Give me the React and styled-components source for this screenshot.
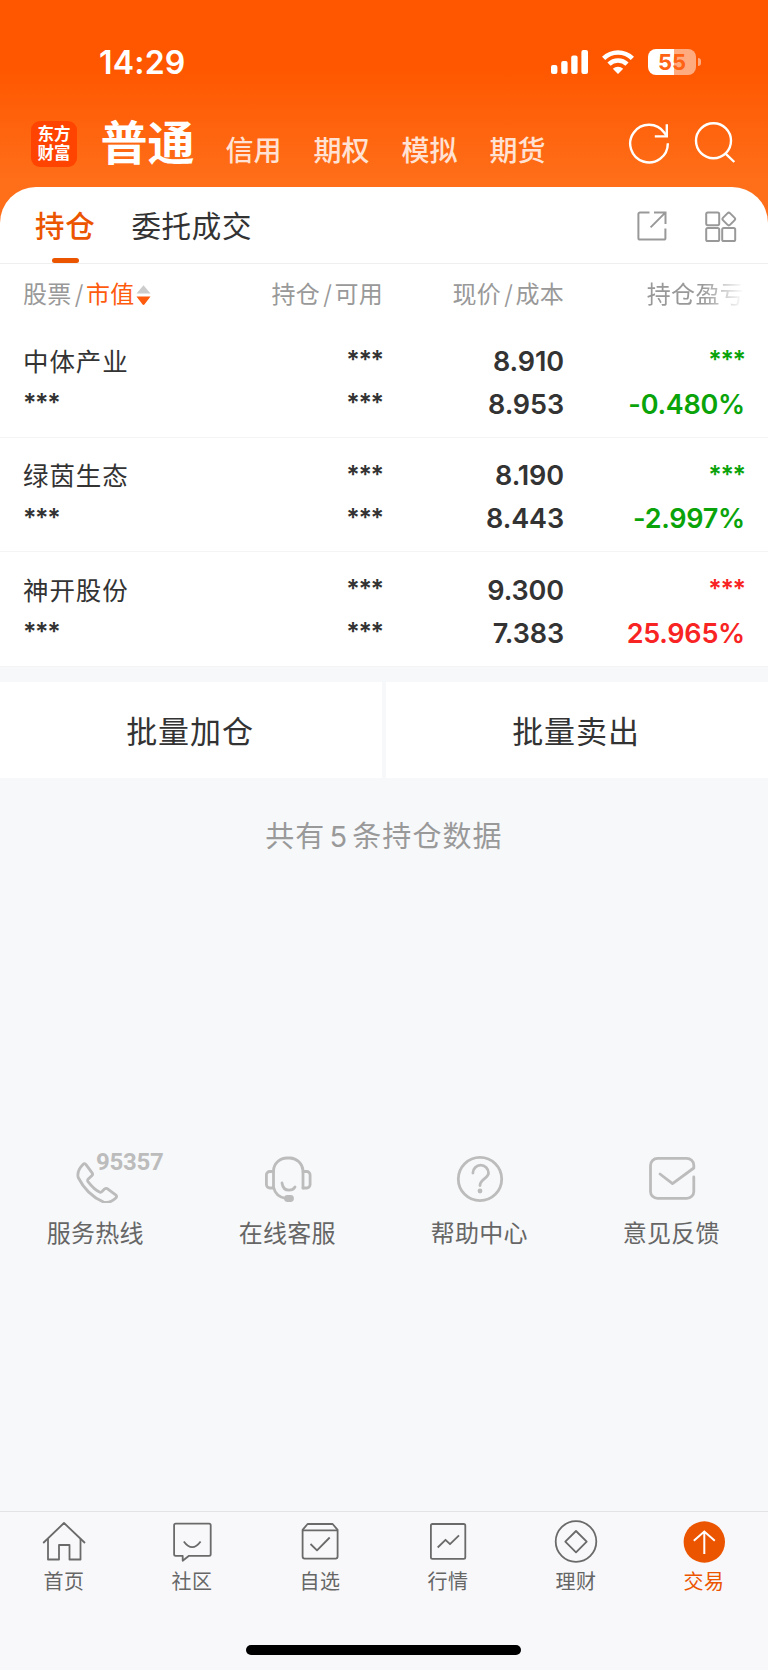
import React, { useState } from "react";
import styled, { createGlobalStyle } from "styled-components";

const holdings = [
  { name: "中体产业", price: "8.910", cost: "8.953", rate: "-0.480%" },
  { name: "绿茵生态", price: "8.190", cost: "8.443", rate: "-2.997%" },
  { name: "神开股份", price: "9.300", cost: "7.383", rate: "25.965%" },
];

const accounts = ["信用", "期权", "模拟", "期货"];

const services = [
  { label: "服务热线", icon: <PhoneIcon />, badge: "95357" },
  { label: "在线客服", icon: <HeadsetIcon /> },
  { label: "帮助中心", icon: <HelpIcon /> },
  { label: "意见反馈", icon: <FeedbackIcon /> },
];

const navItems = [
  { label: "首页", icon: <HomeIcon /> },
  { label: "社区", icon: <CommunityIcon /> },
  { label: "自选", icon: <WatchlistIcon /> },
  { label: "行情", icon: <MarketIcon /> },
  { label: "理财", icon: <WealthIcon /> },
  { label: "交易", icon: <TradeIcon /> },
];

function App() {
  const [tab, setTab] = useState("持仓");
  const [activeNav, setActiveNav] = useState("交易");

  return (
    <Screen>
      <GlobalStyle />
      <Header>
        <StatusBar>
          <Time>14:29</Time>
          <SignalIcon />
          <WifiIcon />
          <Battery>
            <BatteryBody>55</BatteryBody>
            <BatteryTip />
          </Battery>
        </StatusBar>
        <AccountBar>
          <Logo>
            <span>东方</span>
            <span>财富</span>
          </Logo>
          <CurrentAccount>普通</CurrentAccount>
          <Accounts>
            {accounts.map((item) => (
              <Account key={item}>{item}</Account>
            ))}
          </Accounts>
          <RefreshIcon />
          <SearchIcon />
        </AccountBar>
      </Header>
      <Card>
        <Tabs>
          {["持仓", "委托成交"].map((item) => (
            <Tab key={item} $active={item === tab} onClick={() => setTab(item)}>
              {item}
            </Tab>
          ))}
          <TabTools>
            <ExportIcon />
            <GridIcon />
          </TabTools>
        </Tabs>
        <TableHead>
          <HeadCell $left>
            股票<Slash>/</Slash>
            <Sorted>市值</Sorted>
            <SortIcon />
          </HeadCell>
          <HeadCell>
            持仓<Slash>/</Slash>可用
          </HeadCell>
          <HeadCell>
            现价<Slash>/</Slash>成本
          </HeadCell>
          <HeadCell $fade>持仓盈亏</HeadCell>
        </TableHead>
        {holdings.map((item) => (
          <Row key={item.name}>
            <Name>{item.name}</Name>
            <Masked>***</Masked>
            <Figure>{item.price}</Figure>
            <Masked $trend={item.rate[0] === "-" ? "down" : "up"}>***</Masked>
            <Masked $left>***</Masked>
            <Masked>***</Masked>
            <Figure>{item.cost}</Figure>
            <Rate $trend={item.rate[0] === "-" ? "down" : "up"}>
              {item.rate}
            </Rate>
          </Row>
        ))}
      </Card>
      <BatchActions>
        <BatchButton>批量加仓</BatchButton>
        <BatchButton>批量卖出</BatchButton>
      </BatchActions>
      <Summary>
        共有<Count>5</Count>条持仓数据
      </Summary>
      <Services>
        {services.map((item) => (
          <Service key={item.label}>
            <ServiceIcon>
              {item.icon}
              {item.badge && <Hotline>{item.badge}</Hotline>}
            </ServiceIcon>
            <ServiceLabel>{item.label}</ServiceLabel>
          </Service>
        ))}
      </Services>
      <BottomNav>
        <NavList>
          {navItems.map((item) => (
            <NavItem
              key={item.label}
              $active={item.label === activeNav}
              onClick={() => setActiveNav(item.label)}
            >
              {item.icon}
              {item.label}
            </NavItem>
          ))}
        </NavList>
        <HomeIndicator />
      </BottomNav>
    </Screen>
  );
}

export default App;

function SignalIcon() {
  return (
    <svg width="38" height="24" viewBox="0 0 38 24" fill="#fff">
      <rect x="0" y="15" width="6.4" height="9" rx="2" />
      <rect x="10.2" y="11" width="6.4" height="13" rx="2" />
      <rect x="20.2" y="5.5" width="6.4" height="18.5" rx="2" />
      <rect x="30.4" y="0" width="6.6" height="24" rx="2" />
    </svg>
  );
}

function WifiIcon() {
  return (
    <svg width="32" height="24" viewBox="0 0 32 24">
      <g fill="none" stroke="#fff" strokeWidth="4.6">
        <path d="M1.6 8.4a20.6 20.6 0 0 1 28.8 0" />
        <path d="M7 14.1a12.9 12.9 0 0 1 18 0" />
      </g>
      <path d="M16 24l-5.2-5.2a7.5 7.5 0 0 1 10.4 0z" fill="#fff" />
    </svg>
  );
}

function RefreshIcon() {
  return (
    <svg width="42" height="42" viewBox="0 0 42 42" fill="none" stroke="#fff" strokeWidth="2.4">
      <path d="M39.8 21.3A18.8 18.8 0 1 1 36.4 10.8L38.3 13.6" />
      <path d="M38.8 2.2v12.2H26.8" />
    </svg>
  );
}

function SearchIcon() {
  return (
    <svg width="42" height="42" viewBox="0 0 42 42" fill="none" stroke="#fff" strokeWidth="2.4">
      <circle cx="19.5" cy="18.8" r="17.5" />
      <path d="M31 31.2L40.3 40" />
    </svg>
  );
}

function ExportIcon() {
  return (
    <svg width="30" height="30" viewBox="0 0 30 30" fill="none" stroke="#999" strokeWidth="2">
      <path d="M12.5 1.4H3a1.6 1.6 0 0 0-1.6 1.6v24a1.6 1.6 0 0 0 1.6 1.6h24.2a1.2 1.2 0 0 0 1.2-1.2V17.5" />
      <path d="M17 1.4h11.5V13M28.3 1.6L13.6 16.4" />
    </svg>
  );
}

function GridIcon() {
  return (
    <svg width="32" height="32" viewBox="0 0 32 32" fill="none" stroke="#999" strokeWidth="2">
      <rect x="1.2" y="1.6" width="13" height="12.6" rx="1.6" />
      <rect x="1.2" y="17" width="13" height="13" rx="1.6" />
      <rect x="17.2" y="17" width="13" height="13" rx="1.6" />
      <rect x="18.8" y="3" width="10" height="10" rx="2" transform="rotate(45 23.8 8)" />
    </svg>
  );
}

function SortIcon() {
  return (
    <svg width="15" height="21" viewBox="0 0 15 21">
      <path d="M7.5 0.3L14.5 8.5H0.5z" fill="#ccc" />
      <path d="M0.5 11.5h14L8.6 19.3a1.5 1.5 0 0 1-2.2 0z" fill="#fe5b0d" />
    </svg>
  );
}

function PhoneIcon() {
  return (
    <svg width="48" height="48" viewBox="0 0 48 48" {...serviceStroke}>
      <path d="M11.2 9.3Q12.6 8 14 9.6L20.3 18.2Q21 19.4 20 20.4L16 24.3Q15.2 25.4 16 26.6Q22.4 35 28 37.2Q29 37.6 30 36.6L32.5 34Q33.8 33 35.2 33.6L44 40.2Q45.2 41.5 43.8 43Q37.5 49 31.5 47Q15 40 6.2 22.5Q4.5 16 11.2 9.3Z" />
    </svg>
  );
}

function HeadsetIcon() {
  return (
    <svg width="48" height="48" viewBox="0 0 48 48" {...serviceStroke}>
      <path d="M9.5 33V15.5A13.5 13.5 0 0 1 23 3h3a13.5 13.5 0 0 1 13 12.5V33" />
      <path d="M9.5 16.5H5.8a3.4 3.4 0 0 0-3.4 3.4v9.7A3.4 3.4 0 0 0 5.8 33h3.7M39 16.5h3.7a3.4 3.4 0 0 1 3.4 3.4v9.7a3.4 3.4 0 0 1-3.4 3.4H39M9.5 32q2 9.5 12 11.4" />
      <path d="M18 28q1 7.2 7 7.2q4 0 6-3.2" />
      <rect x="21.5" y="41.5" width="7" height="4" rx="2" fill="#bcbcbc" />
    </svg>
  );
}

function HelpIcon() {
  return (
    <svg width="48" height="48" viewBox="0 0 48 48" {...serviceStroke}>
      <circle cx="24" cy="24" r="21.7" />
      <path d="M16.9 18A7.8 7.8 0 0 1 32.5 18C32.5 23.5 24 24 24 30.5" />
      <circle cx="24" cy="36" r="2.4" fill="#bcbcbc" stroke="none" />
    </svg>
  );
}

function FeedbackIcon() {
  return (
    <svg width="48" height="48" viewBox="0 0 48 48" {...serviceStroke}>
      <path d="M12 19L24.5 28.6L45.8 13V10a7 7 0 0 0-7-6.6H9.5a7 7 0 0 0-7 7v26a7 7 0 0 0 7 7h29.3a7 7 0 0 0 7-7V22" />
    </svg>
  );
}

function HomeIcon() {
  return (
    <svg width="44" height="44" viewBox="0 0 44 44" {...navStroke}>
      <path d="M1.2 23L22 3L43 23" />
      <path d="M6 19v20.5h11V25h10.5v14.5h11V19" />
    </svg>
  );
}

function CommunityIcon() {
  return (
    <svg width="44" height="44" viewBox="0 0 44 44" {...navStroke}>
      <path d="M5.7 3.6h33.4a1.6 1.6 0 0 1 1.6 1.6v29a1.6 1.6 0 0 1-1.6 1.6H19L12.7 40.8V35.8h-7a1.6 1.6 0 0 1-1.6-1.6v-29a1.6 1.6 0 0 1 1.6-1.6z" />
      <path d="M13.8 21.5q8.4 11.4 16.8 0" />
    </svg>
  );
}

function WatchlistIcon() {
  return (
    <svg width="44" height="44" viewBox="0 0 44 44" {...navStroke}>
      <path d="M4.6 9.8V36.6a2 2 0 0 0 2 2h31a2 2 0 0 0 2-2V9.8L34.6 4H9.6z" />
      <path d="M4.6 10.4h35M12.5 24l6.5 6.4L31.7 17.5" />
    </svg>
  );
}

function MarketIcon() {
  return (
    <svg width="44" height="44" viewBox="0 0 44 44" {...navStroke}>
      <rect x="4.9" y="4" width="34.4" height="34.8" rx="1.6" />
      <path d="M11.7 27.5L19.5 19.8L24 24.2L33 15.4" />
    </svg>
  );
}

function WealthIcon() {
  return (
    <svg width="44" height="44" viewBox="0 0 44 44" {...navStroke}>
      <circle cx="22" cy="21.5" r="20.3" />
      <path d="M22 11L32.7 21.7L22 32.4L11.3 21.7z" />
    </svg>
  );
}

function TradeIcon() {
  return (
    <svg width="44" height="44" viewBox="0 0 44 44">
      <circle cx="22.3" cy="22" r="20.7" fill="#ec5500" />
      <path d="M22.3 34V11.5M11.8 20.8L22.3 11.5L32.8 20.8" fill="none" stroke="#fff" strokeWidth="2" />
    </svg>
  );
}

const serviceStroke = {
  fill: "none",
  stroke: "#bcbcbc",
  strokeWidth: 2.8,
  strokeLinecap: "round",
  strokeLinejoin: "round",
};

const navStroke = {
  fill: "none",
  stroke: "#6a6a6a",
  strokeWidth: 1.8,
  strokeLinejoin: "round",
};

const GlobalStyle = createGlobalStyle`
  * {
    box-sizing: border-box;
  }
  body {
    margin: 0;
    font-family: Inter, "Noto Sans CJK SC", sans-serif;
    color: #333;
    background: #f7f8fa;
  }
  svg {
    display: block;
    flex-shrink: 0;
  }
`;

const Screen = styled.div`
  display: flex;
  flex-direction: column;
  width: 768px;
  height: 1670px;
  overflow: hidden;
  background: #f7f8fa;
`;

const Header = styled.header`
  height: 232px;
  margin-bottom: -45px;
  background: linear-gradient(#ff5700 0, #ff5700 68px, #ff6e19 180px);
`;

const StatusBar = styled.div`
  display: flex;
  align-items: center;
  height: 124px;
  padding-left: 99px;
`;

const Time = styled.div`
  width: 452px;
  padding-top: 1px;
  font-size: 32px;
  font-weight: 600;
  line-height: 40px;
  letter-spacing: 0.2px;
  color: #fff;

  & + svg {
    margin-right: 13px;
  }
`;

const Battery = styled.div`
  display: flex;
  align-items: center;
  gap: 1.5px;
  margin-left: 14px;
`;

const BatteryBody = styled.div`
  width: 48px;
  height: 26px;
  border-radius: 8px;
  background: linear-gradient(90deg, #fff 54%, #ffab80 54%);
  color: #ff6313;
  font-size: 22px;
  font-weight: 700;
  line-height: 27px;
  text-align: center;
`;

const BatteryTip = styled.div`
  width: 3px;
  height: 8px;
  border-radius: 0 4px 4px 0;
  background: #ffab80;
`;

const AccountBar = styled.div`
  display: flex;
  align-items: center;
  height: 40px;
  padding: 0 32px 0 31px;

  & > svg {
    margin-bottom: 2px;
  }
  & > svg + svg {
    margin-left: 24.5px;
  }
`;

const Logo = styled.div`
  display: flex;
  flex-direction: column;
  align-items: center;
  justify-content: center;
  gap: 0.5px;
  width: 46px;
  height: 46px;
  border-radius: 9px;
  background: #ff4401;
  color: #fff;
  font-family: "Liberation Serif", "Noto Sans CJK SC", serif;
  font-size: 16.5px;
  font-weight: 700;
  line-height: 19px;
`;

const CurrentAccount = styled.div`
  width: 124px;
  padding: 0 0 3px 23.5px;
  color: #fff;
  font-size: 47px;
  font-weight: 700;
  line-height: 50px;
  white-space: nowrap;
`;

const Accounts = styled.div`
  display: flex;
  flex: 1;
  gap: 31px;
  padding: 13px 0 0 24.5px;
`;

const Account = styled.div`
  width: 57px;
  color: #ffe2d3;
  font-size: 28px;
  font-weight: 500;
  line-height: 36px;
  white-space: nowrap;
`;

const Card = styled.main`
  border-radius: 36px 36px 0 0;
  background: #fff;
`;

const Tabs = styled.div`
  display: flex;
  gap: 36px;
  height: 77px;
  padding: 0 31px 0 35px;
  border-bottom: 1px solid #efefef;
`;

const Tab = styled.div`
  display: flex;
  flex-direction: column;
  justify-content: space-between;
  align-items: center;
  padding-top: 19px;
  color: ${(props) => (props.$active ? "#ec5500" : "#333")};
  font-size: 29.5px;
  font-weight: ${(props) => (props.$active ? 500 : 400)};
  line-height: 40px;
  letter-spacing: 0.7px;
  cursor: pointer;

  &::after {
    content: "";
    width: 27px;
    height: 5px;
    border-radius: 2.5px;
    background: ${(props) => (props.$active ? "#ec5500" : "transparent")};
  }
`;

const TabTools = styled.div`
  display: flex;
  gap: 38.5px;
  margin-left: auto;
  padding-top: 23.5px;
`;

const TableHead = styled.div`
  display: grid;
  grid-template-columns: 201px 159px 181px 180px;
  align-items: center;
  height: 59px;
  padding: 3px 24px 0 23px;
`;

const HeadCell = styled.div`
  display: flex;
  align-items: center;
  justify-content: ${(props) => (props.$left ? "flex-start" : "flex-end")};
  color: #999;
  font-size: 24px;
  line-height: 32px;
  letter-spacing: 0.3px;
  ${(props) =>
    props.$fade &&
    "mask-image: linear-gradient(90deg, #000 77%, transparent 100%);"}
`;

const Slash = styled.span`
  margin: 0 2px 0 3px;
  font-size: 26px;
  font-weight: 300;
`;

const Sorted = styled.span`
  margin-right: 1px;
  color: #fe5b0d;
`;

const Row = styled.div`
  display: grid;
  grid-template-columns: 200px 160px 181px 181px;
  grid-template-rows: 43px 43px;
  align-items: center;
  height: 114.7px;
  padding: 17px 23px 0;
  border-bottom: 1.5px solid #f4f4f5;
`;

const Name = styled.div`
  font-size: 25.5px;
  line-height: 36px;
  letter-spacing: 0.9px;
`;

const trendColors = { up: "#f82323", down: "#0aa30a" };

const Figure = styled.div`
  color: ${(props) => trendColors[props.$trend] || "#333"};
  font-size: 27px;
  font-weight: 600;
  line-height: 36px;
  letter-spacing: -0.1px;
  text-align: ${(props) => (props.$left ? "left" : "right")};
`;

const Rate = styled(Figure)`
  letter-spacing: -0.25px;
`;

const Masked = styled(Figure)`
  padding-bottom: 3px;
  font-size: 25px;
  letter-spacing: -1.4px;
  ${(props) => !props.$left && "padding-right: 0.4px;"}
`;

const BatchActions = styled.div`
  display: flex;
  gap: 4px;
  margin-top: 15px;
`;

const BatchButton = styled.button`
  flex: 1;
  height: 96px;
  padding: 0 2px 2px 0;
  border: none;
  background: #fff;
  color: #333;
  font-family: inherit;
  font-size: 31px;
  letter-spacing: 0.9px;
`;

const Summary = styled.div`
  height: 40px;
  margin-top: 39px;
  color: #999;
  font-size: 29px;
  line-height: 40px;
  letter-spacing: 1.1px;
  text-align: center;
`;

const Count = styled.span`
  margin: 0 4px;
`;

const Services = styled.div`
  display: flex;
  margin-top: 298px;
`;

const Service = styled.div`
  flex: 1;
  display: flex;
  flex-direction: column;
  align-items: center;
  gap: 14px;
`;

const ServiceIcon = styled.div`
  position: relative;
`;

const ServiceLabel = styled.div`
  padding-right: 1.5px;
  color: #666;
  font-size: 24px;
  line-height: 34px;
  letter-spacing: 0.3px;
`;

const Hotline = styled.div`
  position: absolute;
  top: -5px;
  left: 24px;
  color: #bcbcbc;
  font-family: Roboto, sans-serif;
  font-size: 24px;
  font-weight: 700;
  line-height: 24px;
  letter-spacing: -0.3px;
`;

const BottomNav = styled.nav`
  display: flex;
  flex-direction: column;
  align-items: center;
  height: 159px;
  margin-top: auto;
  border-top: 1px solid #e3e3e5;
  background: #f8f8fa;
`;

const NavList = styled.div`
  display: flex;
  width: 100%;
  padding-top: 8px;
`;

const NavItem = styled.div`
  flex: 1;
  display: flex;
  flex-direction: column;
  align-items: center;
  gap: 4px;
  color: ${(props) => (props.$active ? "#ec5500" : "#666")};
  font-size: 20px;
  line-height: 28px;
  letter-spacing: 0.6px;
  cursor: pointer;
`;

const HomeIndicator = styled.div`
  width: 275px;
  height: 10px;
  margin: auto 1px 15px 0;
  border-radius: 5px;
  background: #000;
`;
